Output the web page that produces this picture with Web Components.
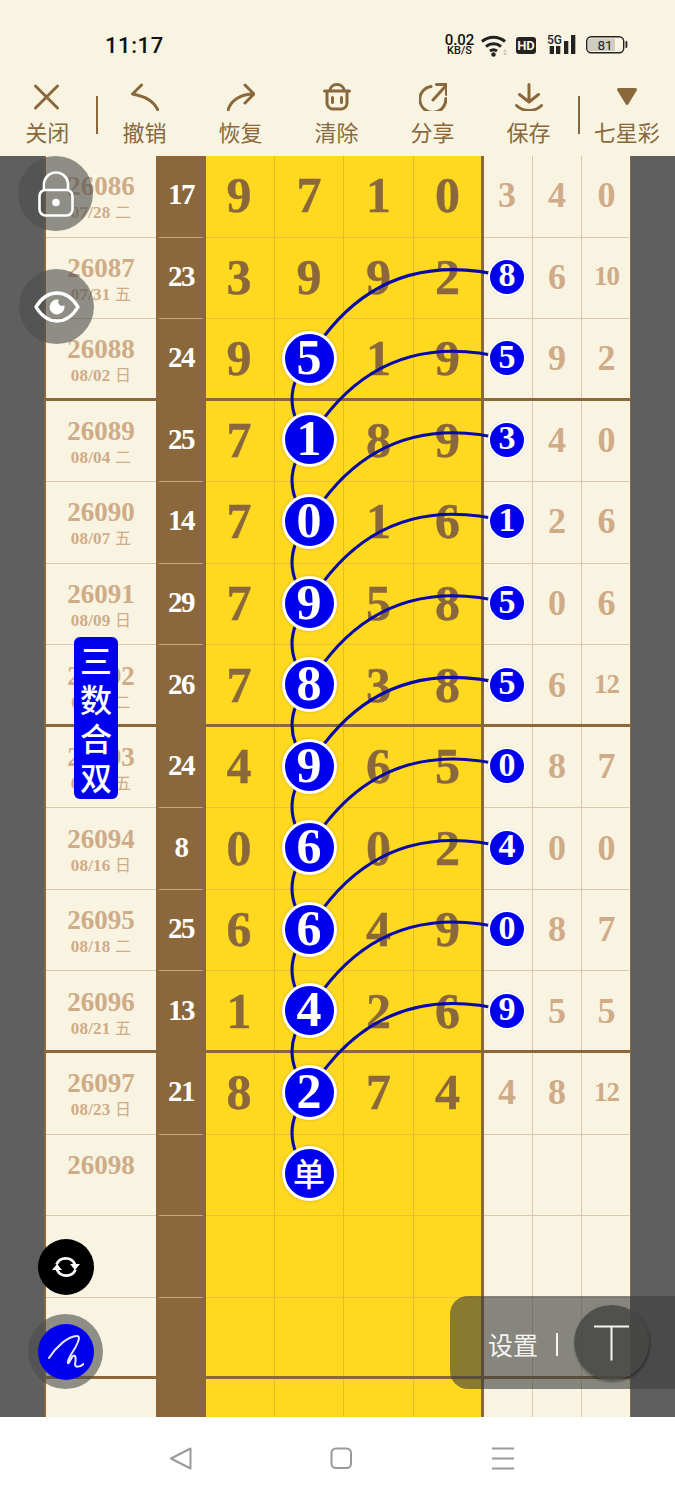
<!DOCTYPE html>
<html>
<head>
<meta charset="utf-8">
<style>
    html, body { margin: 0; padding: 0; background: #f8f4e1; }
    body { width: 675px; height: 1500px; overflow: hidden; font-family: "Liberation Serif", "Noto Sans CJK SC", serif; }
</style>
</head>
<body>
<lottery-app></lottery-app>
<script>
const BROWN = '#8a683c';
const CREAM = '#f8f4e1';
const SANS = '"Noto Sans CJK SC", "Noto Sans", sans-serif';
const ROW_H = 81.55;

class StatusBar extends HTMLElement {
    constructor() {
        super();
        const root = this.attachShadow({ mode: 'open' });
        root.innerHTML = `
            <style>
                :host { display: flex; height: 78px; padding: 12px 42px 0 105px; box-sizing: border-box; align-items: center; justify-content: space-between; font-family: Roboto, sans-serif; color: #111; }
                .time { font-size: 22px; font-weight: 500; letter-spacing: .6px; }
                .icons { display: flex; align-items: center; }
                .speed { display: flex; flex-direction: column; align-items: center; width: 33px; font-size: 15px; line-height: 12px; font-weight: 500; }
                .speed small { font-size: 11px; line-height: 10px; }
                svg { display: block; }
            </style>
            <div class="time">11:17</div>
            <div class="icons">
                <div class="speed">0.02<small>KB/S</small></div>
                <svg width="152" height="24" viewBox="0 0 152 24" style="margin-left:5px">
                    <g fill="none" stroke="#222" stroke-width="3">
                        <path d="M1 8.500a18 18 0 0 1 23 0"/>
                        <path d="M5 13.500a12 12 0 0 1 15 0"/>
                        <path d="M9 18a6 6 0 0 1 7 0"/>
                    </g>
                    <circle cx="12.500" cy="21.500" r="2.200" fill="#222"/>
                    <path d="M22 18.500l2-2.500 2 2.500zM22 20l2 2.500 2-2.500z" fill="#c4c2b8"/>
                    <rect x="35" y="4" width="20" height="17" rx="3" fill="#222"/>
                    <text x="45" y="17" text-anchor="middle" font-family="Roboto, sans-serif" font-size="13" font-weight="700" fill="#f8f4e1">HD</text>
                    <text x="66" y="10.500" font-family="Roboto, sans-serif" font-size="12" font-weight="500" fill="#222">5G</text>
                    <rect x="68.700" y="13" width="4.300" height="8" fill="#222"/>
                    <rect x="75" y="13" width="4.300" height="8" fill="#222"/>
                    <rect x="83" y="8" width="4.300" height="13" fill="#222"/>
                    <rect x="90" y="2" width="4.300" height="19" fill="#222"/>
                    <rect x="105.700" y="3.700" width="37" height="16" rx="4.500" fill="none" stroke="#222" stroke-width="1.400"/>
                    <path d="M108.500 5.500h25.500v12.500h-25.500a1.500 1.500 0 0 1-1.500-1.500v-9.500a1.500 1.500 0 0 1 1.500-1.500z" fill="#cfcdc2"/>
                    <rect x="144.500" y="8" width="1.800" height="7" rx="0.900" fill="#222"/>
                    <text x="124" y="16.500" text-anchor="middle" font-family="Roboto, sans-serif" font-size="13.500" fill="#222">81</text>
                </svg>
            </div>`;
    }
}

const toolIcons = {
    close: '<path d="M2.500 3l22 22M24.500 3L2.500 25"/>',
    undo: '<path d="M10.500 2L1.500 11C10 13 21 15 27 27"/>',
    redo: '<path d="M18 2l9 9-9 9M27 11C14 11 4 17 1 27"/>',
    clear: '<path d="M1.500 8h25M7 8C7 4 10 1.500 14 1.500s7 2.500 7 6.500M4 8v12a6 6 0 0 0 6 6h8a6 6 0 0 0 6-6V8M9.500 14.500v5M18.500 14.500v5"/>',
    share: '<path d="M12 3.500a13 13 0 1 0 14.800 12M14 17L27.500 2M17.500 1.500h10v10"/>',
    save: '<path d="M14 1.500v17M4.500 11.500l9.500 7.500 9.500-7.500M1.500 22.500C5 26 9 27.500 14 27.500s9-1.500 12.500-5"/>',
    pick: '<path d="M5.500 6.500h17L14 20.500z" fill="#8a683c"/>'
};

class ToolItem extends HTMLElement {
    constructor() {
        super();
        const root = this.attachShadow({ mode: 'open' });
        root.innerHTML = `
            <style>
                :host { display: flex; flex-direction: column; align-items: center; width: 96px; color: ${BROWN}; font-family: ${SANS}; font-size: 22px; line-height: 30px; }
                svg { display: block; margin-bottom: 4.500px; }
            </style>
            <svg width="28" height="28" viewBox="0 0 28 28" fill="none" stroke="${BROWN}" stroke-width="3" stroke-linecap="round" stroke-linejoin="round">${toolIcons[this.getAttribute('icon')]}</svg>
            <slot></slot>`;
    }
}

class ToolBar extends HTMLElement {
    constructor() {
        super();
        const root = this.attachShadow({ mode: 'open' });
        root.innerHTML = `
            <style>
                :host { display: flex; height: 78px; box-sizing: border-box; align-items: flex-start; padding-top: 5px; }
                ::slotted(tool-item:first-child) { width: 94.500px; }
                ::slotted(tool-item:last-child) { width: 96.500px; }
            </style>
            <slot></slot>`;
    }
}

class SheetCell extends HTMLElement {
    constructor() {
        super();
        const root = this.attachShadow({ mode: 'open' });
        root.innerHTML = `
            <style>
                :host { display: flex; align-items: center; justify-content: center; box-sizing: border-box; font-weight: 700; min-width: 0; }
                :host([kind=period]) { flex-direction: column; color: #cfab88; font-size: 27px; line-height: 30px; background: ${CREAM}; padding: 1px 0 0 1px; }
                :host([kind=sum]) { background: ${BROWN}; color: #fff; font-size: 29px; letter-spacing: -1.500px; padding-bottom: 4px; }
                :host([kind=main]) { color: ${BROWN}; font-size: 50px; border-left: 1px solid rgba(138,104,60,.24); background: #ffd820; padding-bottom: 3px; -webkit-text-stroke: .4px currentColor; }
                :host([kind=main][first]) { border-left: 0; padding-right: 2px; }
                :host([kind=main][last]) { border-right: 3px solid ${BROWN}; }
                :host([kind=tail]) { color: #cfab88; font-size: 36px; background: ${CREAM}; border-left: 1px solid #d9c8ae; padding-bottom: 3px; }
                :host([kind=tail][first]) { border-left: 0; padding-right: 2px; }
                :host([kind=tail][last]) { border-right: 1.500px solid ${BROWN}; padding-left: 1.500px; }
                :host([small]) { font-size: 27px; letter-spacing: -1px; }
                small { font-size: 17px; line-height: 20px; font-weight: 700; letter-spacing: .2px; }
                .ball { display: flex; align-items: center; justify-content: center; position: relative; z-index: 2; box-sizing: border-box; background: #0000ee; color: #fff; border-radius: 50%; padding-bottom: 3px; -webkit-text-stroke: 0; }
                .ball.big { width: 55px; height: 55px; border: 3px solid #fff; font-size: 50px; box-shadow: 0 0 3px rgba(120,90,30,.35); }
                .ball.tiny { width: 38px; height: 38px; border: 2px solid #fff; font-size: 34px; box-shadow: 0 0 1px #bbb; }
                .ball.word { font-family: ${SANS}; font-size: 32px; font-weight: 500; }
            </style>
            <span id="out"></span>`;
        const out = root.getElementById('out');
        const mark = this.getAttribute('mark');
        if (mark) {
            out.className = 'ball ' + mark + (this.textContent.match(/\d/) ? '' : ' word');
        }
        out.textContent = this.textContent;
        const sub = this.getAttribute('sub');
        if (sub) {
            const s = document.createElement('small');
            s.innerHTML = sub.replace(/(\S+) (\S+)/, '$1 <span style="font-family:' + SANS.replace(/"/g, "'") + ';font-weight:400;font-size:16px">$2</span>');
            root.appendChild(s);
        }
    }
}

class SheetRow extends HTMLElement {
    constructor() {
        super();
        const root = this.attachShadow({ mode: 'open' });
        root.innerHTML = `
            <style>
                :host { display: grid; grid-template-columns: 111px 50px 68px 69px 70px 71px 48px 49px 49.500px; height: ${ROW_H}px; position: relative; }
                :host([tone=thick])::after { content: ""; position: absolute; left: 0; right: 0; bottom: 0; height: 3px; background: ${BROWN}; }
                .line { position: absolute; bottom: 0; height: 1px; background: #d9c8ae; }
                .line.period { left: 0; width: 111px; }
                .line.tail { left: 439px; right: 1.500px; }
                .line.inset { left: 114px; width: 44px; background: #c5a682; }
                .line.gold { left: 161px; width: 275px; background: #ecbf3a; }
            </style>
            <slot></slot>`;
        if (this.getAttribute('tone') !== 'thick') {
            root.innerHTML += '<div class="line period"></div><div class="line inset"></div><div class="line gold"></div><div class="line tail"></div>';
        }
    }
}

class LinkLayer extends HTMLElement {
    constructor() {
        super();
        const root = this.attachShadow({ mode: 'open' });
        const bigX = 264, tinyX = 462;
        let d = '';
        const mid = i => ROW_H * (i + 0.5) - 1.5;
        for (let i = 2; i <= 11; i++) {
            const y = mid(i);
            d += `M${bigX} ${y}C${bigX + 51} ${y - 84} ${bigX + 121} ${y - 101} ${tinyX} ${mid(i - 1)}`;
            d += `M${bigX} ${y}Q${bigX - 34} ${y + ROW_H / 2} ${bigX} ${mid(i + 1)}`;
        }
        root.innerHTML = `
            <style>
                :host { display: block; position: absolute; left: 0; top: 0; width: 585px; height: 1261px; z-index: 1; pointer-events: none; }
                svg { display: block; }
            </style>
            <svg width="585" height="1261"><path d="${d}" fill="none" stroke="#0a0aa6" stroke-width="3"/></svg>`;
    }
}

class DrawSheet extends HTMLElement {
    constructor() {
        super();
        const root = this.attachShadow({ mode: 'open' });
        root.innerHTML = `
            <style>
                :host { display: flex; height: 1261px; overflow: hidden; background: #5f5f5f; padding: 0 0 0 45px; box-sizing: border-box; position: relative; }
                .table { width: 585.500px; flex: none; position: relative; }
                .table::before { content: ""; position: absolute; left: -1px; top: 0; bottom: 0; width: 1.500px; background: ${BROWN}; z-index: 1; }
            </style>
            <div class="table"><link-layer></link-layer><slot></slot></div>`;
    }
}

class FloatButton extends HTMLElement {
    constructor() {
        super();
        const root = this.attachShadow({ mode: 'open' });
        root.innerHTML = `
            <style>
                :host { display: flex; align-items: center; justify-content: center; position: absolute; z-index: 5; border-radius: 50%; box-sizing: border-box; }
                :host([tone=ghost]) { width: 75px; height: 75px; background: rgba(77,77,77,.62); }
                :host([tone=black]) { width: 56px; height: 56px; background: #000; }
                :host([tone=pen]) { width: 75px; height: 75px; background: rgba(77,77,77,.62); }
                .inner { display: flex; align-items: center; justify-content: center; }
                :host([tone=pen]) .inner { width: 56px; height: 56px; border-radius: 50%; background: #0000ee; }
            </style>
            <div class="inner"><slot></slot></div>`;
    }
}

class VerticalTag extends HTMLElement {
    constructor() {
        super();
        const root = this.attachShadow({ mode: 'open' });
        root.innerHTML = `
            <style>
                :host { display: flex; flex-direction: column; align-items: center; justify-content: center; position: absolute; z-index: 5; left: 29px; top: 481px; width: 44px; height: 162px; border-radius: 6px; background: #0000ee; color: #fff; font-family: ${SANS}; font-size: 32px; line-height: 39px; font-weight: 500; }
                ::slotted(span) { display: block; }
            </style>
            <slot></slot>`;
    }
}

class SettingsDock extends HTMLElement {
    constructor() {
        super();
        const root = this.attachShadow({ mode: 'open' });
        root.innerHTML = `
            <style>
                :host { display: flex; align-items: center; position: absolute; z-index: 5; left: 405px; top: 1140px; width: 225px; height: 93px; box-sizing: border-box; padding-left: 38px; border-radius: 18px 0 0 18px; background: rgba(60,60,60,.6); color: #fff; font-family: ${SANS}; font-size: 25px; }
                .label { width: 52px; flex: none; margin-top: 3px; line-height: 34px; color: #f4f3ef; white-space: nowrap; }
                .bar { width: 2px; height: 23px; flex: none; background: #f4f3ef; margin: 3px 0 0 16px; }
                .knob { display: flex; flex: none; align-items: center; justify-content: center; width: 75px; height: 75px; margin-left: 16px; border-radius: 50%; background: rgba(70,70,68,.85); box-shadow: 1px 2px 3px rgba(0,0,0,.4); }
            </style>
            <span class="label"><slot></slot></span>
            <span class="bar"></span>
            <span class="knob">
                <svg width="37" height="36" viewBox="0 0 37 36"><path d="M1 1.500h35M18.500 1.500v34" fill="none" stroke="#f4f3ef" stroke-width="2"/></svg>
            </span>`;
    }
}

class NavBar extends HTMLElement {
    constructor() {
        super();
        const root = this.attachShadow({ mode: 'open' });
        root.innerHTML = `
            <style>
                :host { display: flex; height: 83px; background: #fff; align-items: center; box-sizing: border-box; padding: 0 160px 0 169px; justify-content: space-between; }
                svg { display: block; }
            </style>
            <svg width="23" height="23" viewBox="0 0 23 23" fill="none" stroke="#999" stroke-width="2" stroke-linejoin="round"><path d="M21.500 1.500v20L2 11.500z"/></svg>
            <svg width="23" height="23" viewBox="0 0 23 23" fill="none" stroke="#999" stroke-width="2"><rect x="1.500" y="1.500" width="19.500" height="19.500" rx="4.500"/></svg>
            <svg width="24" height="23" viewBox="0 0 24 23" fill="none" stroke="#999" stroke-width="2"><path d="M1 1.500h22M1 11.500h22M1 21.500h22"/></svg>`;
    }
}

const rows = [
    ['26086', '07/28 二', '17', '9 7 1 0', '3 4 0'],
    ['26087', '07/31 五', '23', '3 9 9 2', '8 6 10'],
    ['26088', '08/02 日', '24', '9 5 1 9', '5 9 2'],
    ['26089', '08/04 二', '25', '7 1 8 9', '3 4 0'],
    ['26090', '08/07 五', '14', '7 0 1 6', '1 2 6'],
    ['26091', '08/09 日', '29', '7 9 5 8', '5 0 6'],
    ['26092', '08/11 二', '26', '7 8 3 8', '5 6 12'],
    ['26093', '08/14 五', '24', '4 9 6 5', '0 8 7'],
    ['26094', '08/16 日', '8', '0 6 0 2', '4 0 0'],
    ['26095', '08/18 二', '25', '6 6 4 9', '0 8 7'],
    ['26096', '08/21 五', '13', '1 4 2 6', '9 5 5'],
    ['26097', '08/23 日', '21', '8 2 7 4', '4 8 12'],
    ['26098', '', '', '  单  ', ''],
    ['', '', '', '', ''],
    ['', '', '', '', ''],
    ['', '', '', '', '']
];

function rowMarkup(r, i) {
    const main = i === 12 ? ['', '单', '', ''] : (r[3] ? r[3].split(' ') : ['', '', '', '']);
    const tail = r[4] ? r[4].split(' ') : ['', '', ''];
    const bigRow = i >= 2 && i <= 12;
    const tinyRow = i >= 1 && i <= 10;
    const thick = (i + 1) % 4 === 3;
    let html = `<sheet-row${thick ? ' tone="thick"' : ''}>`;
    html += `<sheet-cell kind="period"${r[1] ? ` sub="${r[1]}"` : ''}${r[1] ? '' : ' style="padding-bottom:21px"'}>${r[0]}</sheet-cell>`;
    html += `<sheet-cell kind="sum">${r[2]}</sheet-cell>`;
    main.forEach((v, n) => {
        const attrs = (n === 0 ? ' first' : '') + (n === 3 ? ' last' : '') + (n === 1 && bigRow ? ' mark="big"' : '');
        html += `<sheet-cell kind="main"${attrs}>${v}</sheet-cell>`;
    });
    tail.forEach((v, n) => {
        const attrs = (n === 0 ? ' first' : '') + (n === 2 ? ' last' : '') + (n === 0 && tinyRow ? ' mark="tiny"' : '') + (v.length > 1 ? ' small' : '');
        html += `<sheet-cell kind="tail"${attrs}>${v}</sheet-cell>`;
    });
    return html + '</sheet-row>';
}

class LotteryApp extends HTMLElement {
    constructor() {
        super();
        const root = this.attachShadow({ mode: 'open' });
        root.innerHTML = `
            <style>
                :host { display: flex; flex-direction: column; width: 675px; height: 1500px; background: ${CREAM}; position: relative; }
                .sep { flex: none; background: ${BROWN}; width: 2px; height: 38px; margin: 13px -1px 0 1px; }
            </style>
            <status-bar></status-bar>
            <tool-bar>
                <tool-item icon="close">关闭</tool-item>
                <div class="sep"></div>
                <tool-item icon="undo">撤销</tool-item>
                <tool-item icon="redo">恢复</tool-item>
                <tool-item icon="clear">清除</tool-item>
                <tool-item icon="share">分享</tool-item>
                <tool-item icon="save">保存</tool-item>
                <div class="sep"></div>
                <tool-item icon="pick">七星彩</tool-item>
            </tool-bar>
            <draw-sheet>
                ${rows.map(rowMarkup).join('')}
                <float-button tone="ghost" style="left:-27px;top:0">
                    <svg width="36" height="46" viewBox="0 0 36 46" fill="none" stroke="#fff" stroke-width="2.600">
                        <path d="M6 20v-6.500a12 12 0 0 1 24 0v6.500"/>
                        <rect x="1.500" y="19" width="33" height="25.500" rx="6"/>
                        <circle cx="18" cy="31.500" r="3.800" fill="#fff" stroke="none"/>
                    </svg>
                </float-button>
                <float-button tone="ghost" style="left:-26px;top:113px">
                    <svg width="46" height="32" viewBox="0 0 46 32" fill="none" stroke="#fff" stroke-width="3.400">
                        <path d="M2 16C8 6 15 2 23 2s15 4 21 14c-6 10-13 14-21 14S8 26 2 16z" stroke-linejoin="round"/>
                        <path d="M25 8.800a7.500 7.500 0 1 0 5.300 5.300a3.800 3.800 0 0 1-5.300-5.300z" fill="#fff" stroke="none"/>
                    </svg>
                </float-button>
                <vertical-tag><span>三</span><span>数</span><span>合</span><span>双</span></vertical-tag>
                <float-button tone="black" style="left:-7px;top:1083px">
                    <svg width="30" height="26" viewBox="0 0 30 26" fill="none" stroke="#fff" stroke-width="2.800">
                        <path d="M5.500 10.500A10 10 0 0 1 24 10.500"/>
                        <path d="M24.500 15.500A10 10 0 0 1 6 15.500"/>
                        <path d="M19 10h10l-5 6zM1 16h10l-5-6z" fill="#fff" stroke="none"/>
                    </svg>
                </float-button>
                <float-button tone="pen" style="left:-17px;top:1158px">
                    <svg width="36" height="36" viewBox="0 0 36 36" fill="none" stroke="#e8e8ff" stroke-width="2" stroke-linecap="round" stroke-linejoin="round" style="display:block">
                        <path d="M1 24C8 13 20 2 29 2C34 2 28 13 24 19C21 24 19 28 20 29C21 30 23 24 25 22C28 20 28 26 27 30C27 34 32 33 35.500 30"/>
                    </svg>
                </float-button>
                <settings-dock>设置</settings-dock>
            </draw-sheet>
            <nav-bar></nav-bar>`;
    }
}

customElements.define('status-bar', StatusBar);
customElements.define('tool-item', ToolItem);
customElements.define('tool-bar', ToolBar);
customElements.define('sheet-cell', SheetCell);
customElements.define('sheet-row', SheetRow);
customElements.define('link-layer', LinkLayer);
customElements.define('draw-sheet', DrawSheet);
customElements.define('float-button', FloatButton);
customElements.define('vertical-tag', VerticalTag);
customElements.define('settings-dock', SettingsDock);
customElements.define('nav-bar', NavBar);
customElements.define('lottery-app', LotteryApp);
</script>
</body>
</html>
